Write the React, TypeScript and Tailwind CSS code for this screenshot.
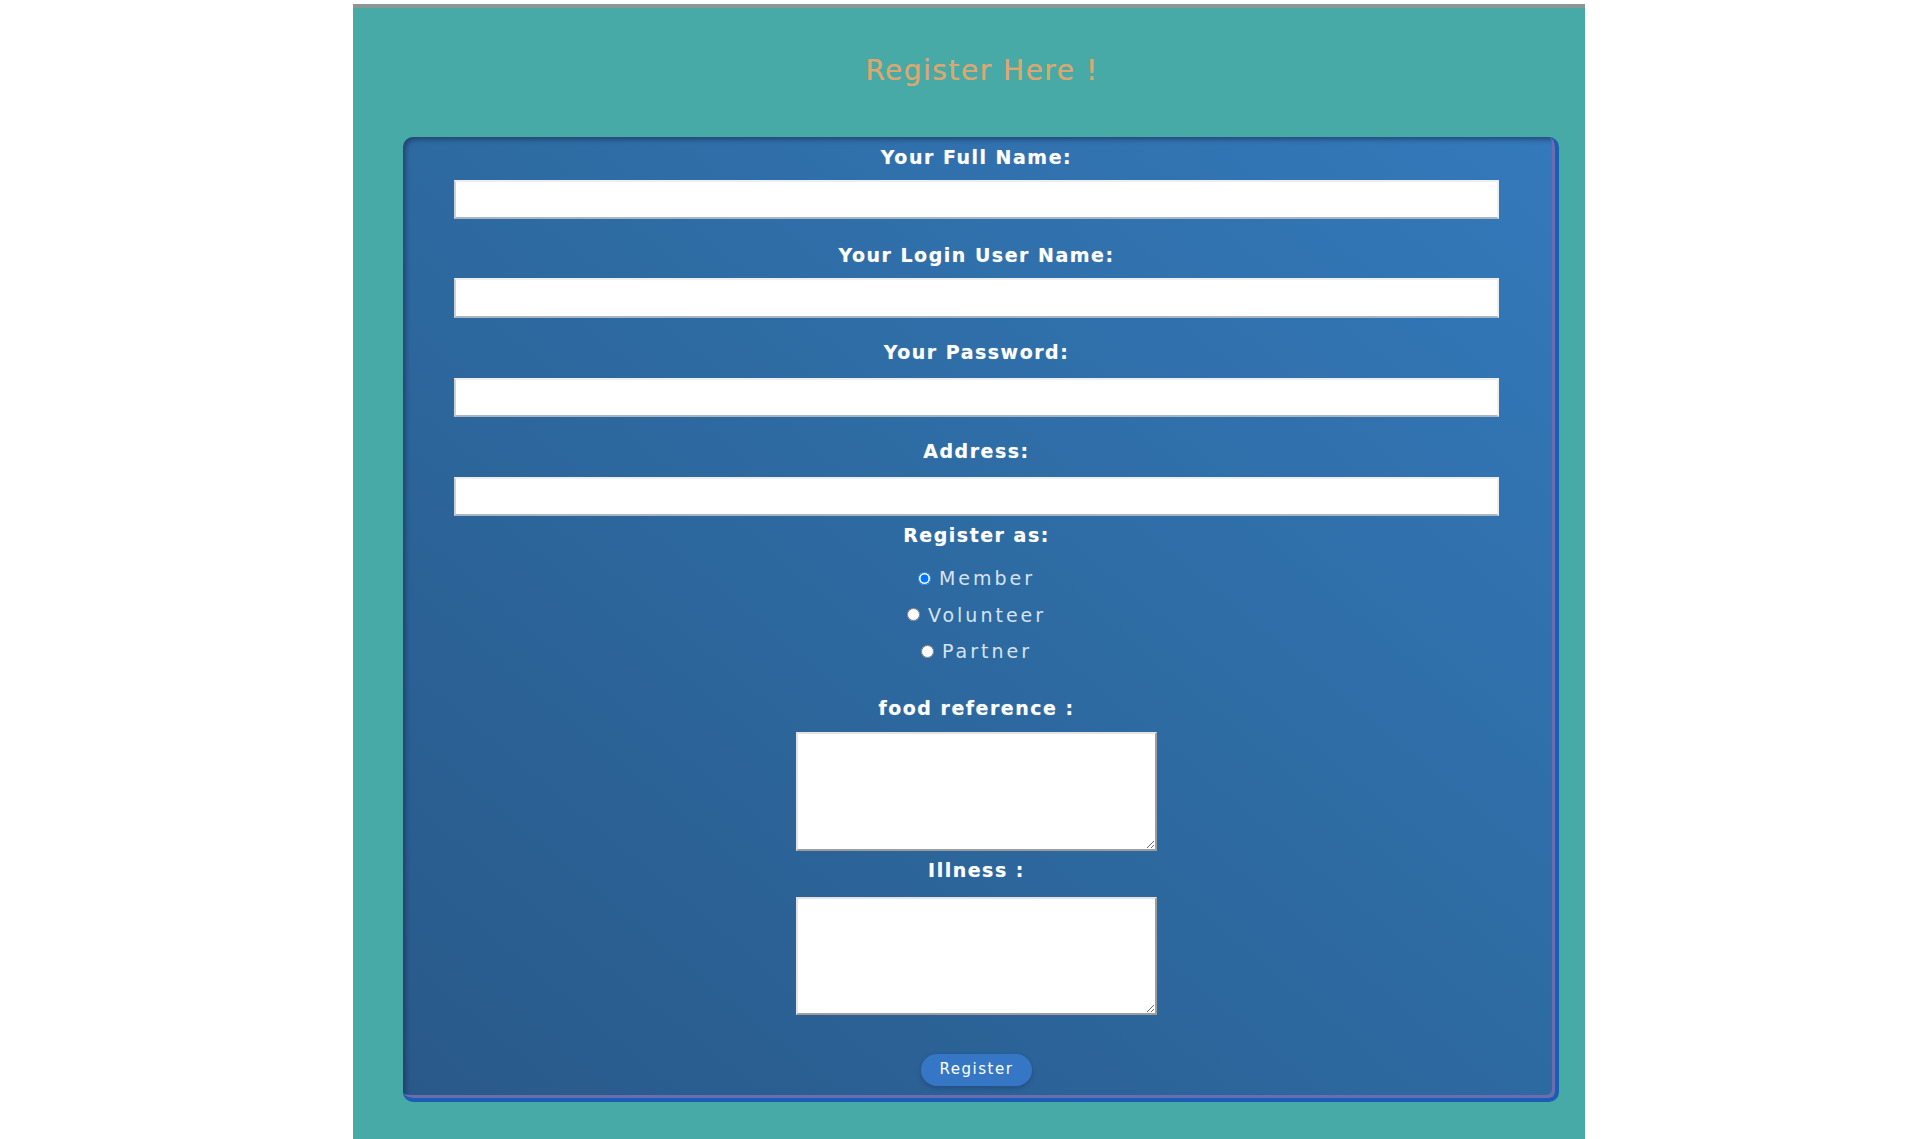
import { useState } from "react";

const labelCls =
  "block text-center text-white font-bold text-[19px] leading-[20px] tracking-[1.5px] [font-family:'DejaVu_Sans',sans-serif] [text-shadow:0_0_1px_rgba(255,255,255,0.4)]";

const inputCls =
  "block w-full h-[39px] bg-white border-2 border-[#eceff2] border-b-[#a9b5c1] border-l-[#c9d1d9] outline-none";

const areaCls =
  "block mx-auto w-[361px] bg-white border-2 border-[#e3e3e3] border-r-[#9d9d9d] border-b-[#9d9d9d] outline-none";

export default function App() {
  const [role, setRole] = useState("member");

  const roles = [
    { id: "member", label: "Member" },
    { id: "volunteer", label: "Volunteer" },
    { id: "partner", label: "Partner" },
  ];

  return (
    <div className="w-full h-[1139px] bg-white pt-[4px] overflow-hidden">
      <div className="ml-[353px] w-[1232px] h-[1200px] bg-[#48aaa7] border-t-[4px] border-[#8b9797]">
        {/* Heading */}
        <h2 className="pt-[48px] pl-[26px] text-center text-[28px] leading-[30px] font-normal tracking-[1.5px] text-[#d9a872] [font-family:'DejaVu_Sans',sans-serif] [text-shadow:0_0_0.6px_#d9a872]">
          Register Here !
        </h2>

        {/* Form card */}
        <form
          onSubmit={(e) => e.preventDefault()}
          className="mt-[51px] ml-[50px] w-[1156px] h-[965px] rounded-[10px] bg-linear-to-tr from-[#29598a] via-[#2d6aa1] to-[#3479bb] border-r-[4px] border-b-[4px] border-[#1a5db5] shadow-[inset_-3px_-3px_0_#6b6db0,inset_3px_3px_4px_rgba(25,45,80,0.55)] pl-[51px] pr-[56px] pt-[10px]"
        >
          <label className={labelCls}>Your Full Name:</label>
          <input type="text" className={`${inputCls} mt-[13px]`} />

          <label className={`${labelCls} mt-[26px]`}>Your Login User Name:</label>
          <input type="text" className={`${inputCls} mt-[13px] h-[40px]`} />

          <label className={`${labelCls} mt-[24px]`}>Your Password:</label>
          <input type="password" className={`${inputCls} mt-[16px]`} />

          <label className={`${labelCls} mt-[24px]`}>Address:</label>
          <input type="text" className={`${inputCls} mt-[16px]`} />

          <label className={`${labelCls} mt-[9px]`}>Register as:</label>
          <div className="mt-[15px] flex flex-col items-center">
            {roles.map((r) => (
              <label
                key={r.id}
                className="h-[36.5px] flex items-center gap-[8px] text-[19px] tracking-[3px] text-[#d6e3f1] [font-family:'DejaVu_Sans',sans-serif]"
              >
                <input
                  type="radio"
                  name="role"
                  checked={role === r.id}
                  onChange={() => setRole(r.id)}
                  className="w-[13px] h-[13px] m-0"
                />
                {r.label}
              </label>
            ))}
          </div>

          <label className={`${labelCls} mt-[28px]`}>food reference :</label>
          <textarea className={`${areaCls} mt-[14px] h-[119px]`} />

          <label className={`${labelCls} mt-[9px]`}>Illness :</label>
          <textarea className={`${areaCls} mt-[17px] h-[118px]`} />

          <div className="mt-[39px] flex justify-center">
            <button
              type="submit"
              className="h-[32px] w-[111px] rounded-full bg-[#3677c5] text-white text-[15px] tracking-[1.5px] [font-family:'DejaVu_Sans',sans-serif] shadow-[0_2px_4px_rgba(30,50,110,0.45)]"
            >
              Register
            </button>
          </div>
        </form>
      </div>
    </div>
  );
}
